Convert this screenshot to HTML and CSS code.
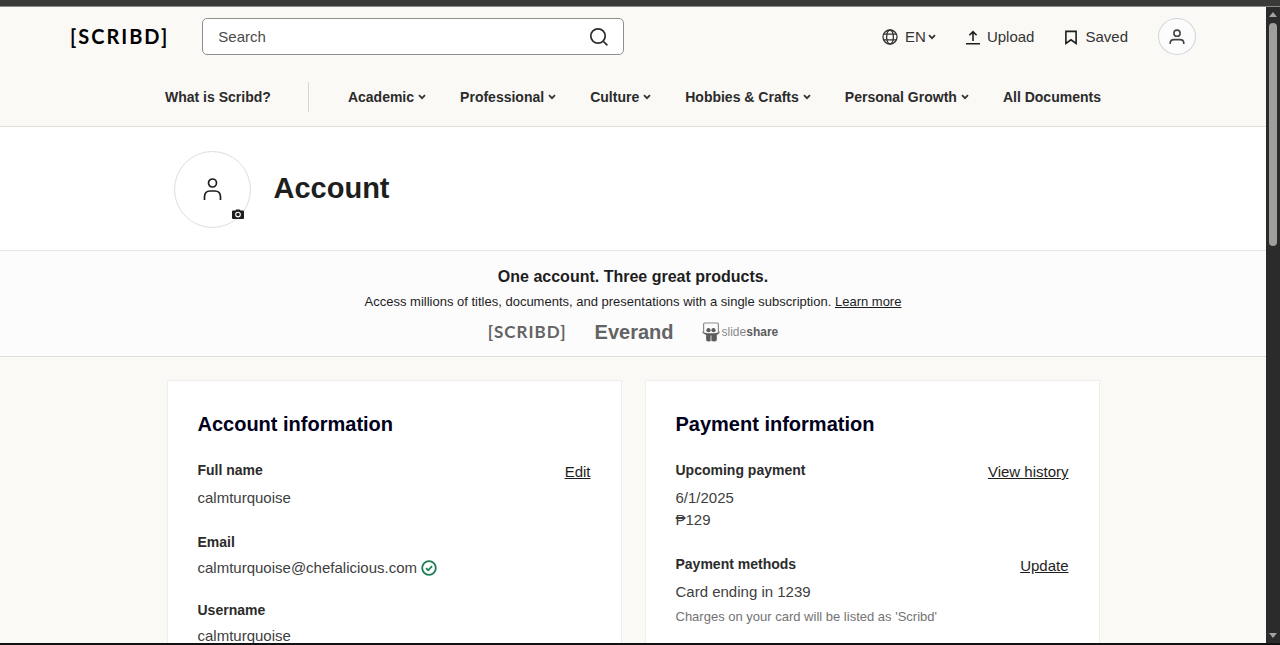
FILE: index.html
```html
<!DOCTYPE html>
<html lang="en">
<head>
  <meta charset="utf-8">
  <title>Account | Scribd</title>
  <link rel="stylesheet" href="styles.css">
</head>
<body>
  <div class="window-top"></div>

  <div class="viewport">
    <div class="page">
      <header class="header">
        <div class="header-main">
          <a href="#" class="logo">[SCRIBD]</a>
          <form class="search">
            <input type="text" class="search-input" placeholder="Search" aria-label="Search">
            <button type="submit" class="search-button" aria-label="Submit search">
              <svg width="20" height="20" viewBox="0 0 20 20" fill="none" stroke="#2b2b2b" stroke-width="1.7">
                <circle cx="9" cy="9" r="7.2" />
                <path d="M14 14l4.400 4.400" />
              </svg>
            </button>
          </form>
          <div class="actions">
            <button type="button" class="action">
              <svg width="16" height="16" viewBox="0 0 16 16" fill="none" stroke="#333" stroke-width="1.3">
                <circle cx="8" cy="8" r="7" />
                <ellipse cx="8" cy="8" rx="3.4" ry="7" />
                <path d="M1.7 5.2h12.6M1.7 10.8h12.6" />
              </svg>
              <span class="drop">EN
                <svg class="chevron" width="8" height="6" viewBox="0 0 8 6"><path d="M1 1.2l3 3 3-3" /></svg>
              </span>
            </button>
            <a href="#" class="action">
              <svg width="14" height="16" viewBox="0 0 14 16" fill="none" stroke="#1e1e1e" stroke-width="1.6">
                <path d="M0 14.800h14M7 12V3M3.4 6.2L7 2.6l3.6 3.6" />
              </svg>
              Upload
            </a>
            <a href="#" class="action">
              <svg width="14" height="16" viewBox="0 0 14 16" fill="none" stroke="#1e1e1e" stroke-width="1.6">
                <path d="M1.9 2.4h10.2v12L7 10.8l-5.1 3.6z" />
              </svg>
              Saved
            </a>
            <button type="button" class="user-button" aria-label="User menu">
              <svg width="16" height="16" viewBox="0 0 16 16" fill="none" stroke="#444" stroke-width="1.6">
                <circle cx="8" cy="4.2" r="3.1" />
                <path d="M1.2 15v-.8c0-2.400 1.6-3.600 3.8-3.600h6c2.2 0 3.8 1.2 3.8 3.600v.8" />
              </svg>
            </button>
          </div>
        </div>

        <nav class="nav">
          <a href="#" class="nav-link">What is Scribd?</a>
          <span class="nav-divider"></span>
          <button type="button" class="nav-link">Academic
            <svg class="chevron" width="8" height="6" viewBox="0 0 8 6"><path d="M1 1.2l3 3 3-3" /></svg>
          </button>
          <button type="button" class="nav-link">Professional
            <svg class="chevron" width="8" height="6" viewBox="0 0 8 6"><path d="M1 1.2l3 3 3-3" /></svg>
          </button>
          <button type="button" class="nav-link">Culture
            <svg class="chevron" width="8" height="6" viewBox="0 0 8 6"><path d="M1 1.2l3 3 3-3" /></svg>
          </button>
          <button type="button" class="nav-link">Hobbies &amp; Crafts
            <svg class="chevron" width="8" height="6" viewBox="0 0 8 6"><path d="M1 1.2l3 3 3-3" /></svg>
          </button>
          <button type="button" class="nav-link">Personal Growth
            <svg class="chevron" width="8" height="6" viewBox="0 0 8 6"><path d="M1 1.2l3 3 3-3" /></svg>
          </button>
          <a href="#" class="nav-link">All Documents</a>
        </nav>
      </header>

      <section class="profile">
        <div class="profile-inner">
          <button type="button" class="avatar" aria-label="Change photo">
            <svg width="19" height="24" viewBox="0 0 19 24" fill="none" stroke="#1e1e1e" stroke-width="1.7">
              <circle cx="9.500" cy="5" r="4" />
              <path d="M1.500 22v-3c0-4 2.400-6 5.600-6h4.800c3.200 0 5.600 2 5.600 6v3" />
            </svg>
            <svg class="camera" width="12" height="10" viewBox="0 0 12 10">
              <path fill="#1e1e1e" d="M1 1.6h2.3L4.2.4h3.6l.9 1.2H11a1 1 0 0 1 1 1V9a1 1 0 0 1-1 1H1a1 1 0 0 1-1-1V2.600a1 1 0 0 1 1-1z" />
              <circle cx="6" cy="5.600" r="2.300" fill="#1e1e1e" stroke="#fff" stroke-width="1.1" />
            </svg>
          </button>
          <h1 class="title">Account</h1>
        </div>
      </section>

      <section class="promo">
        <h2 class="promo-title">One account. Three great products.</h2>
        <p class="promo-text">Access millions of titles, documents, and presentations with a single subscription. <a href="#">Learn more</a></p>
        <div class="brands">
          <span class="brand-scribd">[SCRIBD]</span>
          <span class="brand-everand">Everand</span>
          <span class="brand-slideshare">
            <svg width="18" height="20" viewBox="0 0 18 20">
              <path fill="none" stroke="#8a8a8a" stroke-width="1.2" d="M1.600 10V2.200Q1.600 1 2.800 1h12.400Q16.400 1 16.400 2.200V10" />
              <circle cx="6.500" cy="8.200" r="2.100" fill="#5c5c5c" />
              <circle cx="11.500" cy="8.200" r="2.100" fill="#5c5c5c" />
              <path fill="#5c5c5c" d="M0 9.200c1.500 1.500 3.500 2 9 2s7.500-.5 9-2c-.3 1.700-1.400 2.800-3.200 3.600v4.700c0 1.200-.8 2-2.200 2-1.200 0-2.300-.4-3.200-.4s-1.900.4-3.100.4c-1.400 0-2.200-.8-2.200-2v-4.700C1.800 12 .4 10.900 0 9.200z" />
              <path stroke="#fcfcfd" stroke-width=".8" d="M9 13.500v6" />
            </svg>
            <span>slide<b>share</b></span>
          </span>
        </div>
      </section>

      <main class="cards">
        <section class="card">
          <h2 class="card-title">Account information</h2>
          <div class="field">
            <div>
              <h3 class="label">Full name</h3>
              <p class="value">calmturquoise</p>
            </div>
            <a href="#" class="field-link">Edit</a>
          </div>
          <div class="field compact">
            <div>
              <h3 class="label">Email</h3>
              <p class="value">calmturquoise@chefalicious.com
                <svg class="verified" width="16" height="16" viewBox="0 0 16 16" fill="none" stroke="#1c7c54" stroke-width="1.800">
                  <circle cx="8" cy="8" r="6.800" />
                  <path d="M5 8.100l2.200 2.200 3.900-4.100" />
                </svg>
              </p>
            </div>
          </div>
          <div class="field compact">
            <div>
              <h3 class="label">Username</h3>
              <p class="value">calmturquoise</p>
            </div>
          </div>
        </section>

        <section class="card">
          <h2 class="card-title">Payment information</h2>
          <div class="field">
            <div>
              <h3 class="label">Upcoming payment</h3>
              <p class="value">6/1/2025</p>
              <p class="value">₱129</p>
            </div>
            <a href="#" class="field-link">View history</a>
          </div>
          <div class="field">
            <div>
              <h3 class="label">Payment methods</h3>
              <p class="value">Card ending in 1239</p>
              <p class="note">Charges on your card will be listed as 'Scribd'</p>
            </div>
            <a href="#" class="field-link">Update</a>
          </div>
        </section>
      </main>
    </div>

    <div class="scrollbar">
      <svg width="8" height="5" viewBox="0 0 8 5"><path fill="#a3a3a1" d="M0 5l4-5 4 5z" /></svg>
      <div class="track"><div class="thumb"></div></div>
      <svg width="8" height="5" viewBox="0 0 8 5"><path fill="#a3a3a1" d="M0 0h8L4 5z" /></svg>
    </div>
  </div>

  <div class="window-bottom"></div>
</body>
</html>
```
FILE: styles.css
```css
* {
  box-sizing: border-box;
}
body {
  display: flex;
  flex-direction: column;
  height: 100vh;
  margin: 0;
  overflow: hidden;
  font-family: "Liberation Sans", Arial, sans-serif;
  font-size: 15px;
  line-height: 22px;
  color: #1e1e1e;
}
h1, h2, h3, p {
  margin: 0;
}
a {
  color: inherit;
}
button {
  padding: 0;
  border: none;
  background: none;
  font: inherit;
  color: inherit;
}
svg {
  flex: none;
}

/* browser frame */
.window-top {
  flex: none;
  height: 7px;
  background: #3a3a38;
  border-bottom: 1px solid #8a8a88;
}
.window-bottom {
  flex: none;
  height: 2px;
  background: #121214;
}
.viewport {
  display: flex;
  flex: 1;
  min-height: 0;
}
.page {
  flex: 1;
  min-width: 0;
  overflow: hidden;
  background: #faf9f6;
}
.scrollbar {
  display: flex;
  flex-direction: column;
  align-items: center;
  width: 14px;
  padding: 5px 0;
  background: #2b2b2b;
}
.track {
  flex: 1;
  padding: 6px 0;
}
.thumb {
  width: 8px;
  height: 37%;
  border-radius: 4px;
  background: #9f9f9c;
}

/* header */
.header {
  padding: 11px 70px 14px;
  border-bottom: 1px solid #e0dfdc;
}
.header-main {
  display: flex;
  align-items: center;
}
.logo {
  margin-right: 33px;
  padding-bottom: 2px;
  font-family: Lato, sans-serif;
  font-size: 20px;
  font-weight: bold;
  letter-spacing: 2px;
  color: #000;
  text-decoration: none;
}
.search {
  display: flex;
  flex: 0 1 422px;
  height: 37px;
  border: 1px solid #8f8f8d;
  border-radius: 5px;
  background: #fff;
}
.search-input {
  flex: 1;
  min-width: 0;
  padding: 0 15px;
  border: none;
  outline: none;
  background: none;
  font: inherit;
}
.search-input::placeholder {
  color: #4a4a4d;
}
.search-button {
  display: flex;
  align-items: center;
  padding: 0 14px;
}
.actions {
  display: flex;
  align-items: center;
  gap: 30px;
  margin-left: auto;
}
.action {
  display: flex;
  align-items: center;
  gap: 7px;
  color: #333;
  text-decoration: none;
}
.drop {
  display: flex;
  align-items: center;
  gap: 2px;
}
.chevron {
  fill: none;
  stroke: #333;
  stroke-width: 1.8;
}
.user-button {
  display: flex;
  align-items: center;
  justify-content: center;
  width: 38px;
  height: 37px;
  border: 1px solid #d3d2d8;
  border-radius: 50%;
  background: #fcfcfc;
}
.nav {
  display: flex;
  align-items: center;
  justify-content: space-between;
  max-width: 936px;
  height: 30px;
  margin: 27px auto 0;
}
.nav-link {
  display: flex;
  align-items: center;
  gap: 4px;
  font-size: 14px;
  font-weight: bold;
  color: #2b2b2b;
  text-decoration: none;
}
.nav-divider {
  width: 1px;
  height: 30px;
  margin: 0 5px 0 3px;
  background: #d6d5d2;
}

/* profile */
.profile {
  padding: 24px 0 22px;
  border-bottom: 1px solid #e6e6e6;
  background: #fff;
}
.profile-inner {
  display: flex;
  align-items: center;
  gap: 23px;
  max-width: 933px;
  margin: 0 auto;
  padding: 0 7px;
}
.avatar {
  position: relative;
  display: flex;
  align-items: center;
  justify-content: center;
  width: 77px;
  height: 77px;
  border: 1px solid #dedede;
  border-radius: 50%;
}
.camera {
  position: absolute;
  right: 6px;
  bottom: 8px;
}
.title {
  padding-bottom: 4px;
  font-size: 29px;
  line-height: 36px;
}

/* promo */
.promo {
  padding: 14px 20px 13px;
  border-bottom: 1px solid #e0dfdd;
  background: #fcfcfd;
  text-align: center;
}
.promo-title {
  font-size: 16px;
  line-height: 24px;
}
.promo-text {
  margin-top: 3px;
  font-size: 13px;
  line-height: 20px;
}
.brands {
  display: flex;
  align-items: center;
  justify-content: center;
  gap: 28px;
  height: 22px;
  margin-top: 9px;
  color: #636363;
}
.brand-scribd {
  font-family: Lato, sans-serif;
  font-size: 17px;
  font-weight: bold;
  letter-spacing: 1px;
}
.brand-everand {
  font-size: 20px;
  font-weight: bold;
}
.brand-slideshare {
  display: flex;
  align-items: center;
  gap: 2px;
  font-size: 12px;
  color: #8a8a8a;
}
.brand-slideshare b {
  color: #5c5c5c;
}

/* cards */
.cards {
  display: grid;
  grid-template-columns: 1fr 1fr;
  gap: 23px;
  max-width: 933px;
  margin: 23px auto;
}
.card {
  padding: 30px 30px 40px;
  border: 1px solid #efeeeb;
  background: #fff;
}
.card-title {
  margin-bottom: 22px;
  font-size: 20px;
  line-height: 26px;
  color: #00001c;
}
.field {
  display: flex;
  align-items: flex-start;
  justify-content: space-between;
  margin-bottom: 22px;
}
.label {
  margin-bottom: 6px;
  font-size: 14px;
  color: #2b2b2b;
}
.compact {
  margin-bottom: 20px;
}
.compact .label {
  margin-bottom: 4px;
}
.value {
  color: #404040;
}
.verified {
  vertical-align: -3px;
}
.note {
  margin-top: 3px;
  font-size: 13px;
  color: #737373;
}
.field-link {
  line-height: 26px;
}
```
